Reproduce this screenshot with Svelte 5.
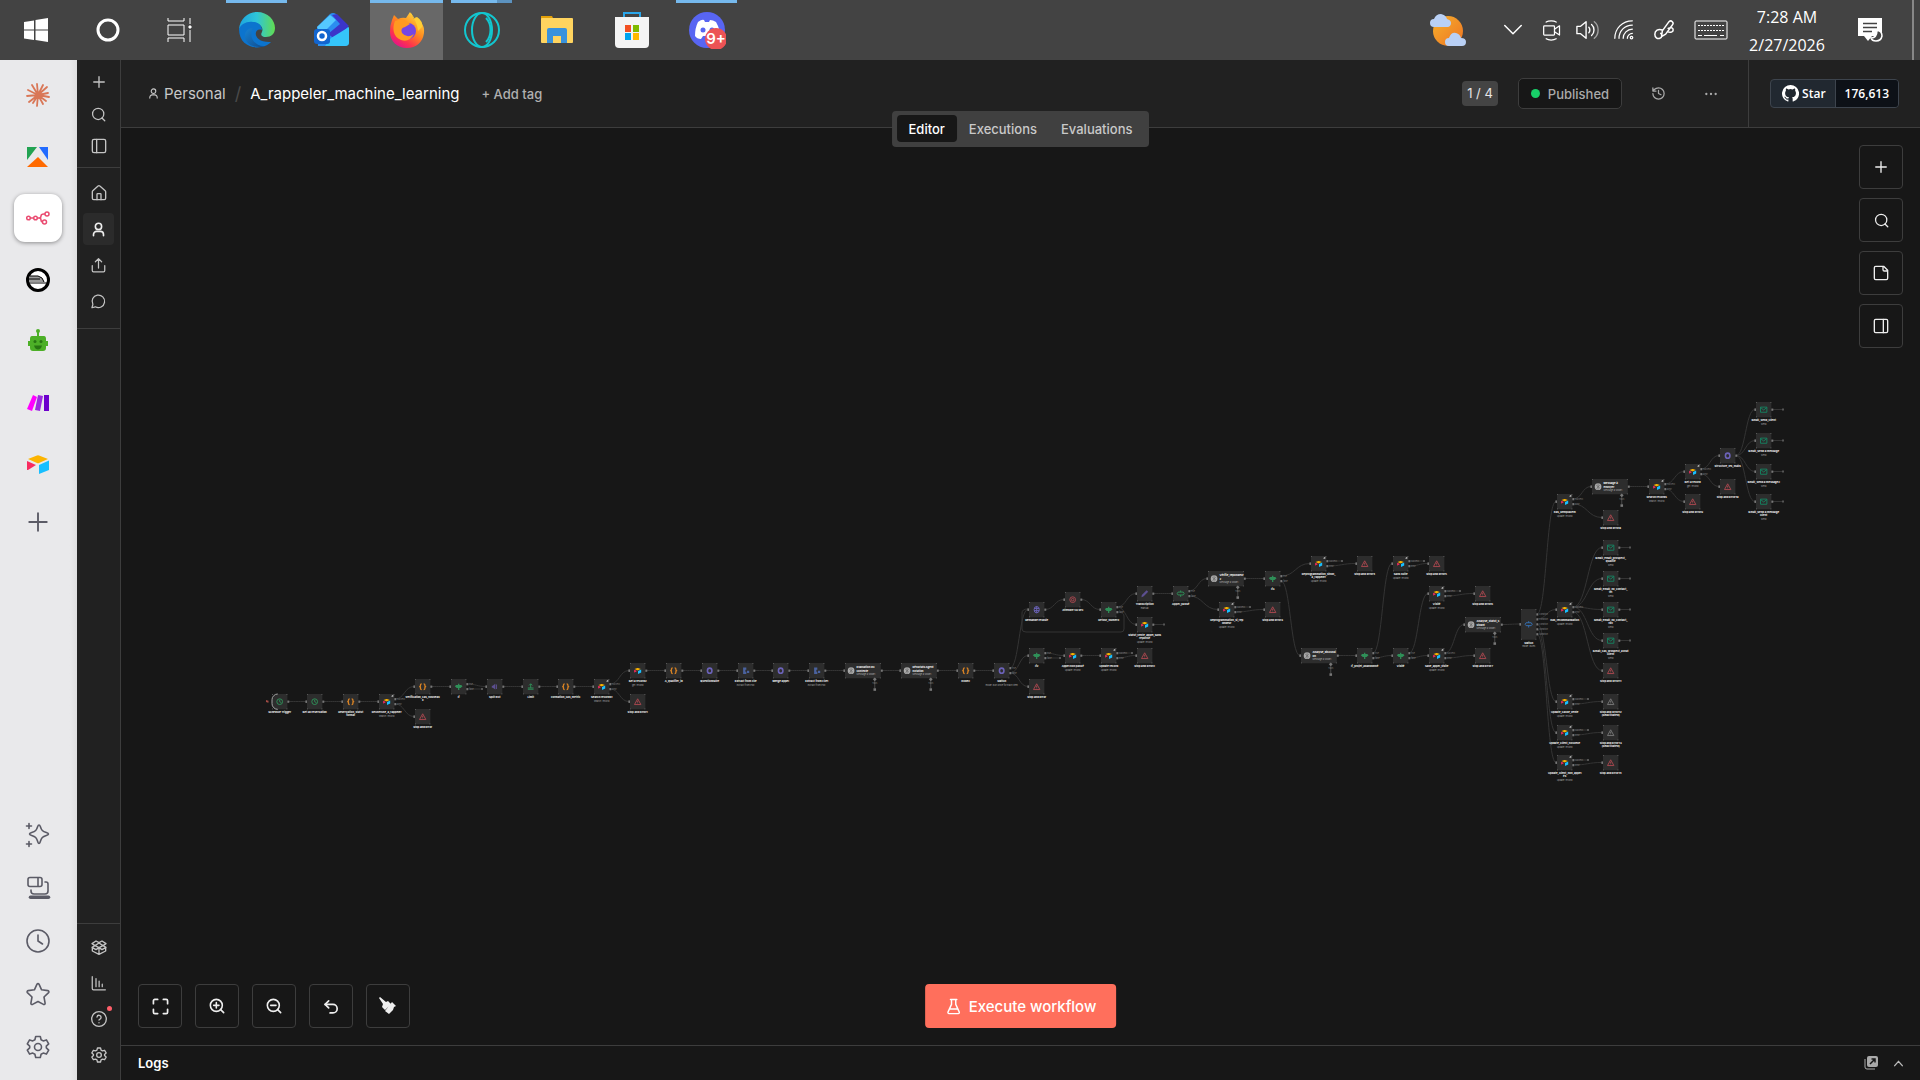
<script lang="ts">
	// Stroke icons, all drawn in a 24 unit box
	const icons: Record<string, string> = {
		plus: '<path d="M5 12h14M12 5v14"/>',
		search: '<circle cx="11.5" cy="11" r="9"/><path d="m22 22-4.500-4.500"/>',
		panelLeft: '<rect x="2" y="2" width="20" height="20" rx="2.500"/><path d="M8.500 2v20"/>',
		panelRight: '<rect x="2" y="2" width="20" height="20" rx="2"/><path d="M15.500 2v20"/>',
		home: '<path d="M15 22v-8a1 1 0 0 0-1-1h-4a1 1 0 0 0-1 1v8"/><path d="M2 10a2 2 0 0 1 .7-1.500l7.900-7a2 2 0 0 1 2.700 0l8 7A2 2 0 0 1 22 10v10a2 2 0 0 1-2 2H4a2 2 0 0 1-2-2z"/>',
		user: '<circle cx="12" cy="7" r="5"/><path d="M20 22v-2a5 5 0 0 0-5-5H9a5 5 0 0 0-5 5v2"/>',
		share: '<path d="M2 12v8a2 2 0 0 0 2 2h16a2 2 0 0 0 2-2v-8M17 6l-5-5-5 5M12 1v15"/>',
		chat: '<path d="M7 20.500A10 10 0 1 0 3 16.500L1.500 22z"/>',
		box: '<path d="M12 22v-9M2 12.500V18l10 5 10-5v-5.500M1.500 7l6-4L12 5.500 16.500 3l6 4-4.500 3 4.500 2.500-6 3.500L12 13l-4.500 3-6-3.500L6 10zM6 10l6 3 6-3-6-4z"/>',
		chart: '<path d="M2 1v19a2 2 0 0 0 2 2h19M8 4v13M13 8v9M18 13v4"/>',
		help: '<circle cx="12" cy="12" r="11"/><path d="M9 9a3 3 0 0 1 6 1c0 2-3 3-3 3.500M12 17.500v.1"/>',
		gear: '<path d="M9.700 1.500h4.600l.8 3.200 2.100 1.200 3.200-1 2.300 4-2.400 2.300v1.600l2.400 2.300-2.300 4-3.200-1-2.100 1.200-.8 3.200H9.700l-.8-3.200-2.100-1.200-3.200 1-2.300-4 2.400-2.300v-1.600L1.300 8.900l2.300-4 3.200 1 2.100-1.200z"/><circle cx="12" cy="12" r="3.500"/>',
		history: '<path d="M3 12a9 9 0 1 0 9-9 9.800 9.800 0 0 0-6.700 2.700L3 8M3 3v5h5M12 7v5l4 2"/>',
		dots: '<circle cx="4" cy="12" r="1"/><circle cx="12" cy="12" r="1"/><circle cx="20" cy="12" r="1"/>',
		note: '<path d="M16 2H4a2 2 0 0 0-2 2v16a2 2 0 0 0 2 2h16a2 2 0 0 0 2-2V8zM15 2v5a2 2 0 0 0 2 2h5"/>',
		fit: '<path d="M8 2H4a2 2 0 0 0-2 2v4M16 2h4a2 2 0 0 1 2 2v4M2 16v4a2 2 0 0 0 2 2h4M22 16v4a2 2 0 0 1-2 2h-4"/>',
		zoomIn: '<circle cx="11" cy="11" r="9"/><path d="m22 22-4.500-4.500M11 7v8M7 11h8"/>',
		zoomOut: '<circle cx="11" cy="11" r="9"/><path d="m22 22-4.500-4.500M7 11h8"/>',
		undo: '<path d="M8 14 3 9l5-5"/><path d="M3 9h11a6 6 0 0 1 0 12h-4"/>',
		flask: '<path d="M9 2v7L4 20a1.500 1.500 0 0 0 1.400 2h13.200A1.500 1.500 0 0 0 20 20L15 9V2M7.500 2h9M6.500 15.500h11"/>',
		up: '<path d="m5 16 7-8 7 8"/>',
		sparkle: '<path d="M13 2c.8 0 1 .6 1.300 1.500 1.200 3.800 2.200 4.900 6 6 .9.300 2.200.8 2.200 1.500s-1.300 1.200-2.200 1.500c-3.800 1.200-4.800 2.200-6 6-.3.900-.5 2-1.300 2s-1-1.100-1.300-2c-1.200-3.800-2.200-4.800-6-6-.9-.3-2.200-.8-2.200-1.500s1.300-1.200 2.200-1.500c3.800-1.100 4.800-2.200 6-6C12 2.600 12.200 2 13 2z"/><path d="M3 .500v5M.500 3h5M3 18.500v5M.500 21h5"/>',
		devices: '<rect x="2" y="1.500" width="14" height="9" rx="2"/><path d="M12 2v8M19 6h1a2 2 0 0 1 2 2v7a3 3 0 0 1-3 3H8a3 3 0 0 1-3-3v-1"/><path stroke-width="3.500" d="M4.500 21.300h18"/>',
		clock: '<circle cx="12" cy="12" r="11"/><path d="M12 6v6l4.500 3"/>',
		star: '<path d="M11 2.200a1.200 1.200 0 0 1 2 0l2.600 5.600 6.300.8a1.200 1.200 0 0 1 .7 2L18 15l1.100 6.200a1.200 1.200 0 0 1-1.700 1.200L12 19.500l-5.400 2.900a1.200 1.200 0 0 1-1.700-1.200L6 15l-4.600-4.400a1.200 1.200 0 0 1 .7-2l6.300-.8z"/>',
		chevron: '<path d="m1 6 11 11L23 6"/>',
		camera: '<rect x="2" y="7" width="13" height="11" rx="1"/><path d="m15 11 6-4v11l-6-4M5 2.500c3-2 9-2 12 0M5 22.500c3 2 9 2 12 0"/>',
		volume: '<path d="M1 8v8h4l6 5V3L5 8zM14 9c1.500 1.500 1.500 4.500 0 6M17 6c3.500 3 3.500 9 0 12"/><path opacity=".5" d="M20 3c5.500 4.500 5.500 13.500 0 18"/>',
		wifi: '<path d="M1 22C1 10 10 1 22 1M6 22C6 13 13 6 22 6M11 22c0-6 5-11 11-11M16 22c0-3 3-6 6-6"/><circle cx="21" cy="21" r="1.500"/>',
		pen: '<path d="M9 20 10 13 18 2q2-2 4 0t0 4l-8 11zM10 12c-5-2-9 1-9 5s3 6 6 5 3-5 1-6M17 10c4-2 6 0 6 2s-3 4-7 2"/>'
	};

	const pinned = ['claude', 'convert', 'n8n', 'train', 'robot', 'make', 'airtable'];
	const tools = ['sparkle', 'devices', 'clock', 'star', 'gear'];
	const apps = [
		{ name: 'Edge', open: true },
		{ name: 'Outlook' },
		{ name: 'Firefox', open: true, active: true },
		{ name: 'Opera', open: true, stacked: true },
		{ name: 'Explorer' },
		{ name: 'Store' },
		{ name: 'Discord', open: true }
	];

	type FlowNode = { id: string; x: number; y: number; kind: string; label: string[]; sub?: string; outs?: number };

	const n = (id: string, x: number, y: number, kind: string, label: string, sub = '', outs = 1): FlowNode => ({
		id, x, y, kind, label: label.split('|'), sub, outs
	});

	// x and y are the top left corner of the node on the canvas
	const nodes: FlowNode[] = [
		n('trigger', 272, 694, 'clock', 'Schedule Trigger'),
		n('wait', 307, 694, 'clock', 'Get all reservation'),
		n('code1', 343, 694, 'code', 'Reservation_statut|format'),
		n('air1', 379, 694, 'airtable', 'Recherche_a_rappeler', 'search: record', 2),
		n('code2', 415, 679, 'code', 'verification_cas_nouveau|x'),
		n('stop1', 415, 709, 'stop', 'Stop and Error'),
		n('if1', 451, 679, 'if', 'If', '', 2),
		n('split1', 487, 679, 'speaker', 'Split Out'),
		n('limit', 523, 679, 'limit', 'Limit'),
		n('code3', 558, 679, 'code', 'Formation_cas_metric'),
		n('air2', 594, 679, 'airtable', 'Search records1', 'search: record', 2),
		n('air3', 630, 663, 'airtable', 'Get a record2', 'get: record'),
		n('stop2', 630, 694, 'stop', 'Stop and Error1'),
		n('code4', 666, 663, 'code', 'A_qualifier_id'),
		n('data1', 702, 663, 'data', 'Questionnaire'),
		n('blue1', 738, 663, 'extract', 'Extract from File', 'Extract from PDF'),
		n('data2', 773, 663, 'data', 'Merge appel'),
		n('blue2', 809, 663, 'extract', 'Extract from File1', 'Extract from PDF'),
		n('agent1', 845, 663, 'agent', 'Evaluation du|contexte'),
		n('agent2', 901, 663, 'agent', 'Résultats Agent|notation'),
		n('code5', 958, 663, 'code', 'Code2'),
		n('data3', 994, 663, 'data', 'Switch', 'mode: Run Once for Each Item', 2),
		n('loop', 1029, 602, 'globe', 'Demande reussie'),
		n('retry', 1065, 592, 'ring', 'Attendre 50 sec'),
		n('if2', 1101, 602, 'if', 'Retour_Numero', '', 2),
		n('edit', 1137, 586, 'pencil', 'Transcription', 'manual'),
		n('air4', 1137, 617, 'airtable', 'Statut_vente_appel_sans|reponse', 'update: record'),
		n('if3', 1173, 586, 'sign', 'Appel_passé', '', 2),
		n('if4', 1029, 648, 'if', 'If2', '', 2),
		n('air5', 1065, 648, 'airtable', 'Appel non passé', 'update: record'),
		n('air6', 1101, 648, 'airtable', 'Update record', 'update: record', 2),
		n('stop3', 1137, 648, 'stop', 'Stop and Error2'),
		n('stop4', 1029, 679, 'stop', 'Stop and Error'),
		n('agent3', 1208, 571, 'agent', 'Vérifie_repondeur|2'),
		n('if5', 1265, 571, 'if', 'If3', '', 2),
		n('air7', 1219, 602, 'airtable', 'Reprogrammation_si_rep|ondeur', 'update: record', 2),
		n('stop5', 1265, 602, 'stop', 'Stop and Error3'),
		n('air8', 1311, 556, 'airtable', 'Reprogrammation_sinon_|à_rappeler', 'update: record', 2),
		n('stop6', 1357, 556, 'stop', 'Stop and Error4'),
		n('air9', 1393, 556, 'airtable', 'Sans suite', 'update: record', 2),
		n('stop7', 1429, 556, 'stop', 'Stop and Error5'),
		n('air10', 1429, 586, 'airtable', 'Visité', 'update: record', 2),
		n('stop8', 1475, 586, 'stop', 'Stop and Error6'),
		n('agent4', 1301, 648, 'agent', 'Analyse_discussi|on'),
		n('if6', 1357, 648, 'if', 'If_projet_abandonné', '', 2),
		n('if7', 1393, 648, 'if', 'Visité', '', 2),
		n('air11', 1429, 648, 'airtable', 'Save_appel_visite', 'update: record', 2),
		n('agent5', 1465, 617, 'agent', 'Analyse_statut_s|uivant'),
		n('stop9', 1475, 648, 'stop', 'Stop and Error7'),
		n('switch', 1521, 609, 'switch', 'Switch', 'mode: Rules', 5),
		n('air12', 1557, 494, 'airtable', 'Cas_Remplacem', 'update: record', 2),
		n('agent6', 1592, 479, 'agent', 'Message à|envoyer'),
		n('stop10', 1603, 510, 'stop', 'Stop and Error8'),
		n('air13', 1649, 479, 'airtable', 'Search records', 'search: record', 2),
		n('air14', 1685, 464, 'airtable', 'Get a record', 'get: record', 2),
		n('stop11', 1685, 494, 'stop', 'Stop and Error9'),
		n('data4', 1720, 448, 'data', 'Structure_les_mails'),
		n('stop12', 1720, 479, 'stop', 'Stop and Error10'),
		n('mail1', 1756, 402, 'mail', 'Gmail_Send_client', 'Send'),
		n('mail2', 1756, 433, 'mail', 'Gmail_Send a message', 'Send'),
		n('mail3', 1756, 464, 'mail', 'Gmail_Send a message2', 'Send'),
		n('mail4', 1756, 494, 'mail', 'Gmail_Send a message|client', 'Send'),
		n('mail5', 1603, 540, 'mail', 'Gmail_email_prospect_|qualifié', 'Send'),
		n('mail6', 1603, 571, 'mail', 'Gmail_email_no_contact_|tel', 'Send'),
		n('mail7', 1603, 602, 'mail', 'Gmail_email_no_contact_|rdv', 'Send'),
		n('mail8', 1603, 633, 'mail', 'Gmail_cas_prospect_achat|client', 'Send'),
		n('stop13', 1603, 663, 'stop', 'Stop and Error11'),
		n('air15', 1557, 602, 'airtable', 'Cas_recommandation', 'update: record', 2),
		n('air16', 1557, 694, 'airtable', 'Update_cause_vente', 'update: record', 2),
		n('air17', 1557, 725, 'airtable', 'Update_client_nouvelle', 'update: record', 2),
		n('air18', 1557, 755, 'airtable', 'Update_client_non_appel|és', 'update: record', 2),
		n('off1', 1603, 694, 'stopOff', 'Stop and Error12|(Deactivated)'),
		n('off2', 1603, 725, 'stopOff', 'Stop and Error13|(Deactivated)'),
		n('stop14', 1603, 755, 'stop', 'Stop and Error14')
	];

	// source, target, output index
	const links: [string, string, number?][] = [
		['trigger', 'wait'], ['wait', 'code1'], ['code1', 'air1'], ['air1', 'code2'], ['air1', 'stop1', 1],
		['code2', 'if1'], ['if1', 'split1'], ['split1', 'limit'], ['limit', 'code3'], ['code3', 'air2'],
		['air2', 'air3'], ['air2', 'stop2', 1], ['air3', 'code4'], ['code4', 'data1'], ['data1', 'blue1'],
		['blue1', 'data2'], ['data2', 'blue2'], ['blue2', 'agent1'], ['agent1', 'agent2'], ['agent2', 'code5'],
		['code5', 'data3'], ['data3', 'loop'], ['data3', 'if4', 1], ['data3', 'stop4', 1], ['loop', 'retry'],
		['retry', 'if2'], ['if2', 'edit'], ['if2', 'air4'], ['edit', 'if3'], ['if3', 'agent3'], ['if3', 'air7', 1],
		['if4', 'air5'], ['air5', 'air6'], ['air6', 'stop3', 1], ['agent3', 'if5'], ['air7', 'stop5', 1],
		['if5', 'air8'], ['if5', 'agent4', 1], ['air8', 'stop6', 1], ['agent4', 'if6'], ['if6', 'air9'],
		['if6', 'if7', 1], ['if7', 'air10'], ['if7', 'air11', 1], ['air9', 'stop7', 1], ['air10', 'stop8', 1],
		['air11', 'agent5'], ['air11', 'stop9', 1], ['agent5', 'switch'], ['switch', 'air12'],
		['switch', 'air15', 1], ['switch', 'air16', 2], ['switch', 'air17', 3], ['switch', 'air18', 4],
		['air12', 'agent6'], ['air12', 'stop10', 1], ['agent6', 'air13'], ['air13', 'air14'],
		['air13', 'stop11', 1], ['air14', 'data4'], ['air14', 'stop12', 1], ['data4', 'mail1'], ['data4', 'mail2'],
		['data4', 'mail3'], ['data4', 'mail4'], ['air15', 'mail5'], ['air15', 'mail6'], ['air15', 'mail7'],
		['air15', 'mail8'], ['air15', 'stop13', 1], ['air16', 'off1', 1], ['air17', 'off2', 1], ['air18', 'stop14', 1]
	];

	// nodes with an unconnected output
	const open = ['if1', 'if4', 'air4', 'air6', 'air7', 'air8', 'air9', 'air10', 'air16', 'air17', 'air18',
		'mail1', 'mail2', 'mail3', 'mail4', 'mail5', 'mail6', 'mail7', 'mail8'];
	const lowStub = ['if1', 'if4'];

	const byId = Object.fromEntries(nodes.map((node) => [node.id, node]));
	const widthOf = (node: FlowNode) => (node.kind === 'agent' ? 36 : 15);
	const heightOf = (node: FlowNode) => (node.kind === 'switch' ? 30 : 15);
	const stubLength = (node: FlowNode) => (node.kind !== 'mail' && node.outs === 2 ? 14 : 10);

	function outY(node: FlowNode, index = 0) {
		const mid = node.y + heightOf(node) / 2;
		const count = node.outs ?? 1;
		return mid + (index - (count - 1) / 2) * 5;
	}

	function linkPath([from, to, index]: [string, string, number?]) {
		const a = byId[from];
		const b = byId[to];
		const x1 = a.x + widthOf(a) + 1;
		const y1 = outY(a, index);
		const x2 = b.x - 1;
		const y2 = b.y + heightOf(b) / 2;
		const mid = (x1 + x2) / 2;
		return `M${x1} ${y1}C${mid} ${y1} ${mid} ${y2} ${x2} ${y2}`;
	}
</script>

{#snippet icon(name: string, size = 16, weight = 2)}
	<svg class="icon" width={size} height={size} viewBox="0 0 24 24" stroke-width={weight} aria-hidden="true">{@html icons[name]}</svg>
{/snippet}

{#snippet airtableLogo()}
	<path fill="#fcb400" d="M2 7 11 3.500a3 3 0 0 1 2 0L22 7l-9 4a3 3 0 0 1-2 0z" />
	<path fill="#18bfff" d="m13 13 10-4.500V18l-10 4z" />
	<path fill="#f82b60" d="M1 9l9 4-8 5H1z" />
{/snippet}

<div class="screen">
	<header class="taskbar">
		<nav class="system" aria-label="System">
			<button aria-label="Start">
				<svg width="24" height="24" viewBox="0 0 24 24" fill="#fff"><path d="M0 4l10-1.500V11.500H0zM11.500 2 24 0v11.500H11.500zM0 12.500h10V22L0 20.500zM11.500 12.500H24V24l-12.500-2z" /></svg>
			</button>
			<button aria-label="Cortana">
				<svg width="24" height="24" viewBox="0 0 24 24" fill="none" stroke="#fff" stroke-width="3"><circle cx="12" cy="12" r="10" /></svg>
			</button>
			<button aria-label="Task view">
				<svg width="26" height="24" viewBox="0 0 26 24" fill="none" stroke="#fff"><path d="M1 0v3h16V0M1 24v-4h16v4M1 7h16v10H1zM23 0v6M23 12v12" /><path fill="#fff" d="M22 8h2v2h-2z" /></svg>
			</button>
		</nav>
		<nav class="apps" aria-label="Applications">
			{#each apps as app}
				<button class:active={app.active} class:open={app.open} class:stacked={app.stacked} aria-label={app.name}>
					<svg width="38" height="38" viewBox="0 0 38 38" fill="none">
						{#if app.name === 'Edge'}
							<defs>
								<linearGradient id="edgeTop" x1="0" x2="1"><stop stop-color="#1ca4e0" /><stop offset=".5" stop-color="#2fc5d8" /><stop offset="1" stop-color="#62dc50" /></linearGradient>
								<linearGradient id="edgeLow" x1="0" y1="0" x2="1" y2="1"><stop stop-color="#1682d4" /><stop offset="1" stop-color="#114a8b" /></linearGradient>
							</defs>
							<path fill="url(#edgeTop)" d="M1 18C2 8 10 1 19 1c11 0 18 8 18 16 0 6-4 9-9 9-4 0-6-2-4-5 2-5-3-9-8-9-7 0-12 3-15 6z" />
							<path fill="#0c74ce" d="M1 18c2-5 8-8 14-7 6 0 9 4 9 8-9-3-10 13 9 12-8 9-32 8-32-13z" />
							<path fill="url(#edgeLow)" d="M15 17c-5 9 2 19 12 18-4 2-17 2-20-8-1-6 3-10 8-10z" />
						{:else if app.name === 'Outlook'}
							<path fill="#2b8df0" d="M4 16 17 3q3-2 6 0l12 12v17a3 3 0 0 1-3 3H5z" />
							<path fill="#55c8ff" d="m4 16 13-12 6 5L8 24z" />
							<path fill="#3b35c9" d="m19 4 5-1 12 12-14 13-7-5 12-10z" />
							<path fill="#35c5fa" d="m18 27 18-11v16q0 3-4 3H12z" />
							<rect x="1" y="18" width="16" height="15" rx="3" fill="#1265cf" /><circle cx="9" cy="25" r="4" stroke="#fff" stroke-width="2.5" />
						{:else if app.name === 'Firefox'}
							<defs><linearGradient id="fox" x1="1" y1="0" x2=".3" y2="1"><stop stop-color="#fff44f" /><stop offset=".5" stop-color="#ff8a1e" /><stop offset=".8" stop-color="#ff334d" /><stop offset="1" stop-color="#e61587" /></linearGradient></defs>
							<path fill="url(#fox)" d="M4 9l2-5 4 4q4-2 8-1l4-6 4 7 2-2c5 4 9 9 8 16-1 9-8 15-17 15C9 37 2 30 2 21q0-7 2-12z" />
							<circle cx="20" cy="20" r="8" fill="#7446e4" />
							<path fill="#ff9a21" d="M7 10q7-3 11 0l4 3-5 3q-5 1-3 6 5 6 12 1-5 9-13 6C5 26 4 17 7 10z" />
							<path fill="#ffcf35" d="M22 3q7 6 8 17l4-4q1-6-5-10l-2 2-4-6z" />
						{:else if app.name === 'Opera'}
							<g stroke="#12c6cf" stroke-width="2"><circle cx="19" cy="19" r="17" /><ellipse cx="19" cy="19" rx="10" ry="17" /><path d="M23 7c6 6 6 18 0 24" /></g>
						{:else if app.name === 'Explorer'}
							<path fill="#e3a008" d="M3 5h11l2 4H3z" /><rect x="3" y="7" width="32" height="25" rx="1" fill="#ffd45f" />
							<path fill="#3992dc" d="M9 19q0-2 2-2h16q2 0 2 2v13h-6v-7h-8v7H9z" />
						{:else if app.name === 'Store'}
							<path stroke="#2aa6ea" stroke-width="2" d="M11 9V2h16v7" /><path fill="#f4f4f4" d="M2 6h34v27q0 4-4 4H6q-4 0-4-4z" />
							<path fill="#f25022" d="M12 14h6v7h-6z" /><path fill="#7fba00" d="M20 14h6v7h-6z" /><path fill="#00a4ef" d="M12 22h6v7h-6z" /><path fill="#ffb900" d="M20 22h6v7h-6z" />
						{:else}
							<circle cx="19" cy="19" r="18" fill="#5865f2" />
							<path fill="#fff" d="M10 11q4-3 6-2l1 2h4l1-2q3 0 6 2 4 7 4 14-4 3-7 3l-1-3h-9l-2 3q-4 0-6-3 0-8 3-14z" /><circle cx="15" cy="19" r="2.500" fill="#5865f2" /><circle cx="24" cy="19" r="2.500" fill="#5865f2" />
							<circle cx="28" cy="28" r="11" fill="#ec5355" />
							<text x="28" y="33" class="badge" text-anchor="middle">9+</text>
						{/if}
					</svg>
				</button>
			{/each}
		</nav>
		<div class="tray">
			<button class="weather" aria-label="Weather">
				<svg width="38" height="34" viewBox="0 0 38 34">
					<defs><linearGradient id="sun" y2="1"><stop stop-color="#f6b02c" /><stop offset="1" stop-color="#ee7423" /></linearGradient></defs>
					<circle cx="19" cy="18" r="15" fill="url(#sun)" />
					<path fill="#b9d0f5" d="M5 14a4 4 0 0 1 0-8q2-5 7-5 5 1 6 5 4 1 4 4 0 3-3 4zM20 33a4 4 0 0 1 0-8q2-6 7-5 4 1 5 5 5 0 5 4 0 4-4 4z" />
				</svg>
			</button>
			<button class="chev" aria-label="Show hidden icons">{@render icon('chevron', 18, 2)}</button>
			<button class="small" aria-label="Meet now">{@render icon('camera', 20, 1.5)}</button>
			<button class="small" aria-label="Volume">{@render icon('volume', 22, 1.5)}</button>
			<button class="wide" aria-label="Network">{@render icon('wifi', 20, 1.5)}</button>
			<button class="wide" aria-label="Pen">{@render icon('pen', 20, 1.8)}</button>
			<button class="keyboard" aria-label="Keyboard">
				<svg width="34" height="20" viewBox="0 0 34 20" fill="none" stroke="#fff"><rect x="1" y="1" width="32" height="18" rx="1" /><path stroke-dasharray="2 1" d="M4 5.500h26M4 10.500h26" /><path d="M4 15.500h4M10 15.500h13M26 15.500h4" /></svg>
			</button>
			<time datetime="2026-02-27T07:28">7:28 AM<br />2/27/2026</time>
			<button class="notice" aria-label="Notifications">
				<svg width="26" height="26" viewBox="0 0 26 26"><path fill="#fff" d="M1 1h24v18H15l-4 5-4-5H1z" /><path stroke="#444" stroke-width="1.500" d="M6 6.500h14M6 10.500h14M6 14.500h9" /><path fill="#444" stroke="#fff" stroke-width="1.500" d="M20 13q5 1 5 6-1 5-6 5-4 0-5-3 6 0 6-8z" /></svg>
			</button>
		</div>
	</header>

	<div class="body">
		<aside class="browser">
			<div class="pinned">
				{#each pinned as name}
					<button class:current={name === 'n8n'} aria-label={name}>
						<svg width="24" height="24" viewBox="0 0 24 24" fill="none">
							{#if name === 'claude'}
								<g stroke="#d97757" stroke-width="1.800" stroke-linecap="round"><path d="M12 12 11 1M12 12l5-10M12 12l9-8M12 12l10-2M12 12l11 2M12 12l8 6M12 12l5 9M12 12l-1 11M12 12l-5 8M12 12l-9 7M12 12 1 13M12 12 2 7M12 12 6 2" /></g>
							{:else if name === 'convert'}
								<path fill="#22a352" d="M1 2h10L1 15z" /><path fill="#226bff" d="M13 2h9v13z" /><path fill="#ff6a00" d="m12 12 10 10H1z" />
							{:else if name === 'n8n'}
								<g stroke="#ea4b71" stroke-width="1.500"><circle cx="2.500" cy="12" r="1.800" /><circle cx="9.500" cy="12" r="1.800" /><circle cx="21" cy="8" r="2" /><circle cx="18.500" cy="16" r="2" /><path d="M4.500 12h3M11.500 12h1.500q2 0 2-2t3-2h1M13 12q2 0 2 2t2 2" /></g>
							{:else if name === 'train'}
								<circle cx="12" cy="12" r="10.500" fill="#fff" stroke="#000" stroke-width="3" /><path fill="#999" d="M3 8h9q5 1 6 6H3z" /><path stroke="#000" d="M3 8h9q5 1 6 6M3 11h11M2 15h20" />
							{:else if name === 'robot'}
								<path fill="#4caf27" d="M11 3h2v4h5q2 0 2 3v2h2v5h-2v2q0 3-3 3H7q-3 0-3-3v-2H2v-5h2v-2q0-3 2-3h5z" /><circle cx="12" cy="2" r="2" fill="#4caf27" /><g fill="#277512"><circle cx="9" cy="12.500" r="1.500" /><circle cx="15" cy="12.500" r="1.500" /><path d="M8 16.500h8q-1 4-4 4t-4-4z" /></g>
							{:else if name === 'make'}
								<path fill="#f0f" d="m1 18 6-14 4 2-5 14z" /><path fill="#9b2be0" d="m9 19 3-15 5 1-3 15z" /><path fill="#6d00cc" d="M18 4h5v16h-5z" />
							{:else}
								{@render airtableLogo()}
							{/if}
						</svg>
					</button>
				{/each}
			</div>
			<button class="newtab" aria-label="Add">{@render icon('plus', 30, 1.5)}</button>
			<div class="tools">
				{#each tools as name}
					<button aria-label={name}>{@render icon(name, 24, 1.6)}</button>
				{/each}
			</div>
		</aside>

		<nav class="rail" aria-label="Main">
			<div class="group first">
				<button aria-label="Create">{@render icon('plus', 18, 1.8)}</button>
				<button aria-label="Search">{@render icon('search', 15, 2)}</button>
				<button aria-label="Toggle sidebar">{@render icon('panelLeft', 16, 2)}</button>
			</div>
			<div class="group second">
				<button aria-label="Home">{@render icon('home', 16, 2)}</button>
				<button class="current" aria-label="Personal">{@render icon('user', 15, 2.6)}</button>
				<button aria-label="Shared">{@render icon('share', 15, 2)}</button>
				<button aria-label="Chat">{@render icon('chat', 15, 2)}</button>
			</div>
			<div class="group last">
				<button aria-label="Templates">{@render icon('box', 16, 2)}</button>
				<button aria-label="Insights">{@render icon('chart', 15, 2)}</button>
				<button class="help" aria-label="Help">{@render icon('help', 16, 2)}</button>
				<button aria-label="Settings">{@render icon('gear', 16, 2)}</button>
			</div>
		</nav>

		<main>
			<header class="workflow">
				<a class="owner" href="#personal">{@render icon('user', 11, 2.4)}Personal</a>
				<span class="slash">/</span>
				<h1>A_rappeler_machine_learning</h1>
				<button class="addtag">+ Add tag</button>
				<div class="actions">
					<span class="count">1 / 4</span>
					<button class="published"><i></i>Published</button>
					<button class="plain" aria-label="History">{@render icon('history', 15, 2)}</button>
					<button class="plain" aria-label="More">{@render icon('dots', 14, 2)}</button>
				</div>
				<div class="github">
					<a class="stargroup" href="#star">
						<svg width="17" height="17" viewBox="0 0 16 16" fill="#fff" aria-hidden="true"><path d="M8 0a8 8 0 0 0-2.530 15.590c.4.070.550-.17.550-.38v-1.490c-2.010.37-2.530-.49-2.690-.94-.09-.23-.48-.94-.82-1.130-.28-.15-.68-.52-.01-.53.63-.01 1.080.58 1.230.82.72 1.210 1.870.87 2.330.66.07-.52.28-.87.51-1.070-1.780-.2-3.640-.89-3.640-3.950 0-.87.31-1.590.82-2.150-.08-.2-.36-1.020.08-2.120 0 0 .67-.21 2.200.82a7.600 7.600 0 0 1 4 0c1.530-1.040 2.200-.82 2.200-.82.44 1.100.16 1.920.08 2.120.51.56.82 1.270.82 2.150 0 3.070-1.870 3.750-3.650 3.950.29.25.54.73.54 1.480v2.200c0 .21.150.46.55.38A8 8 0 0 0 8 0z" /></svg>
						<span class="starword">Star</span>
						<span class="stars">176,613</span>
					</a>
				</div>
			</header>

			<section class="canvas" aria-label="Workflow canvas">
				<svg class="flow" viewBox="121 128 1799 917">
					<g class="links">
						{#each links as link}
							<path d={linkPath(link)} />
						{/each}
						<!-- loop back to the start of the retry chain -->
						<path d="M1117 612q7 0 7 4v13q0 3-3 3h-95q-4 0-4-3v-16q0-4 6-4" />
						{#each open as id}
							{@const node = byId[id]}
							{@const y = outY(node, lowStub.includes(id) ? 1 : 0)}
							{@const end = node.x + 16 + stubLength(node)}
							<path d="M{node.x + 16} {y}H{end}" />
							<rect class="end" x={end} y={y - 1} width="2" height="2" />
						{/each}
					</g>

					<path class="bolt" d="m266 700 3 1-1 1 1 1-3-1z" />

					{#each nodes as node}
						{@const w = node.kind === 'agent' ? 224 : 96}
						{@const h = node.kind === 'switch' ? 192 : 96}
						<g class="node" transform="translate({node.x} {node.y}) scale(.16)">
							{#if node.id === 'trigger'}
								<path class="card" d="M36 0h60v96H36a36 36 0 0 1-36-36V36A36 36 0 0 1 36 0z" />
								<path class="edge" d="M36 0A36 36 0 0 0 0 36v24a36 36 0 0 0 36 36" />
							{:else}
								<rect class="card" width={w} height={h} rx="6" />
								<rect class="handle" x="-10" y={h / 2 - 8} width="10" height="16" />
							{/if}
							{#each [[0, 0], [w - 6, 0], [0, h - 6], [w - 6, h - 6]] as corner}
								<rect class="corner" x={corner[0]} y={corner[1]} width="6" height="6" />
							{/each}
							{#if !node.kind.startsWith('stop')}
								{#each Array(node.outs) as _, i}
									{@const oy = h / 2 + (i - ((node.outs ?? 1) - 1) / 2) * 31}
									<rect class="handle" x={w} y={oy - 7} width="12" height="14" />
									{#if node.outs === 2 || node.outs === 5}
										<text class="out" x={w + 18} y={oy + 5}>{node.outs === 5 ? 'Condition' : node.kind === 'airtable' ? (i ? 'Error' : 'Success') : i ? 'false' : 'true'}</text>
									{/if}
								{/each}
							{/if}

							{#if node.kind === 'agent'}
								<circle cx="38" cy="48" r="21" fill="#aaa" /><path class="knot" d="M26 38l24 20M50 36 28 60M38 28v40" />
								{#each node.label as line, i}
									<text class="label" x="72" y={30 + i * 24}>{line}</text>
								{/each}
								<text class="sub" x="72" y="78">Message a Model</text>
								<path class="model" d="M186 102v56" /><path class="diamond" d="m186 90 12 12-12 12-12-12z" /><rect class="handle" x="178" y="158" width="16" height="16" />
								<text class="out" x="186" y="132" text-anchor="middle">Tools</text>
							{:else}
								<g transform="translate({w / 2 - 24} {h / 2 - 24}) scale(2)" class="glyph {node.kind}">
									{#if node.kind === 'airtable'}
										{@render airtableLogo()}
									{:else if node.kind === 'clock'}
										<circle cx="12" cy="12" r="9" /><path d="M12 6v6l5 3" />
									{:else if node.kind === 'code'}
										<path d="M9 3q-4 0-4 4v3l-2 2 2 2v3q0 4 4 4M15 3q4 0 4 4v3l2 2-2 2v3q0 4-4 4" />
									{:else if node.kind === 'if'}
										<path class="solid" d="M4 7h16l4 4-6 5h-4v6h-4v-6H6l-6-5zM10 3h4v5h-4z" />
									{:else if node.kind === 'sign' || node.kind === 'switch'}
										<path d="M4 7h16l3 5-3 4H4l-3-4zM12 2v5M12 16v6" />
									{:else if node.kind.startsWith('stop')}
										<path d="m12 3 10 18H2zM12 9v6M12 18v1" />
									{:else if node.kind === 'data'}
										<ellipse cx="12" cy="12" rx="7" ry="8" />
									{:else if node.kind === 'globe'}
										<ellipse cx="12" cy="12" rx="8" ry="10" /><path d="M4 8h16M4 15h16M12 2v20" />
									{:else if node.kind === 'speaker'}
										<path class="solid" d="M14 3v18l-8-6H3V9h3zM16 5h3v14h-3z" />
									{:else if node.kind === 'limit'}
										<path d="M12 3v13M7 8l5-5 5 5M3 20h18M3 16h18" />
									{:else if node.kind === 'extract'}
										<path class="solid" d="M4 2h10v7h-3v6h3v7H4zM16 12h7v7h-7z" />
									{:else if node.kind === 'ring'}
										<circle cx="12" cy="12" r="9" /><circle cx="12" cy="12" r="4" />
									{:else if node.kind === 'pencil'}
										<path class="solid" d="M18 1l5 5L8 21l-6 2 1-7z" />
									{:else if node.kind === 'mail'}
										<path d="M2 4h20v16H2zM2 5l10 8 10-8" />
									{/if}
								</g>
								{#each node.label as line, i}
									<text class="label" x="48" y={h + 24 + i * 20} text-anchor="middle">{line}</text>
								{/each}
								{#if node.sub}
									<text class="sub" x="48" y={h + 24 + node.label.length * 22} text-anchor="middle">{node.sub}</text>
								{/if}
								{#if node.kind === 'airtable' && node.outs === 2}
									<path class="pin" d="M78 14h8v-8" />
								{/if}
							{/if}
						</g>
					{/each}
				</svg>

				<div class="tabs" role="tablist">
					<button role="tab" aria-selected="true" class="selected">Editor</button>
					<button role="tab" aria-selected="false">Executions</button>
					<button role="tab" aria-selected="false">Evaluations</button>
				</div>

				<div class="side">
					<button class="tool" aria-label="Add node">{@render icon('plus', 18, 1.8)}</button>
					<button class="tool" aria-label="Find node">{@render icon('search', 15, 2)}</button>
					<button class="tool" aria-label="Add note">{@render icon('note', 16, 2)}</button>
					<button class="tool" aria-label="Toggle panel">{@render icon('panelRight', 16, 2)}</button>
				</div>

				<div class="controls">
					<button class="tool" aria-label="Fit view">{@render icon('fit', 17, 2.4)}</button>
					<button class="tool" aria-label="Zoom in">{@render icon('zoomIn', 16, 2.4)}</button>
					<button class="tool" aria-label="Zoom out">{@render icon('zoomOut', 16, 2.4)}</button>
					<button class="tool" aria-label="Undo">{@render icon('undo', 17, 2.4)}</button>
					<button class="tool" aria-label="Tidy up">
						<svg width="18" height="18" viewBox="0 0 18 18" fill="#eee"><path d="m0 1 1-1 6 5 2-1 3 3-6 6-3-3 1-3zM13 5l4 4-2 1-1 3-4 4-4-3z" /></svg>
					</button>
				</div>

				<button class="execute">{@render icon('flask', 17, 2)}Execute workflow</button>
			</section>

			<footer>
				<span>Logs</span>
				<div class="logactions">
					<button aria-label="Pop out">
						<svg width="14" height="14" viewBox="0 0 14 14" fill="none"><path stroke="#aaa" d="M1 3v8q0 2 2 2h8" /><rect x="3" width="11" height="11" rx="2" fill="#aaa" /><path stroke="#171717" stroke-width="1.500" d="m6 8 5-5M7.500 3H11v3.500" /></svg>
					</button>
					<button aria-label="Open logs">{@render icon('up', 13, 2.5)}</button>
				</div>
			</footer>
		</main>
	</div>
</div>

<style>
	:global(body) {
		margin: 0;
		background: #171717;
	}

	.screen {
		display: flex;
		flex-direction: column;
		height: 100vh;
		font-family: Inter, 'Liberation Sans', sans-serif;
		color: #fff;
	}

	button {
		display: flex;
		align-items: center;
		justify-content: center;
		padding: 0;
		border: none;
		background: none;
		color: inherit;
		font: inherit;
		cursor: pointer;
	}

	a {
		color: inherit;
		text-decoration: none;
	}

	.icon {
		fill: none;
		stroke: currentColor;
		stroke-linecap: round;
		stroke-linejoin: round;
		overflow: visible;
	}

	/* Taskbar */
	.taskbar {
		display: flex;
		height: 60px;
		flex: none;
		background: #434343;
	}

	.system,
	.apps,
	.tray {
		display: flex;
	}

	.system button {
		width: 72px;
	}

	.apps {
		gap: 2px;
		margin-left: 4px;
	}

	.apps button {
		position: relative;
		width: 73px;
	}

	.apps .active {
		background: #686868;
	}

	.apps .open::before {
		content: '';
		position: absolute;
		top: 0;
		left: 6px;
		right: 6px;
		height: 3px;
		background: #76b9ed;
	}

	.apps .active::before {
		left: 0;
		right: 0;
	}

	.apps .stacked::before {
		background: linear-gradient(90deg, #76b9ed 76%, #5c92bf 76%);
	}

	.badge {
		fill: #fff;
		font-size: 15px;
		font-weight: 600;
	}

	.tray {
		margin-left: auto;
		align-items: center;
		padding-right: 8px;
		border-right: 2px solid #888;
		margin-right: 6px;
	}

	.weather {
		width: 88px;
	}

	.chev {
		width: 42px;
	}

	.small {
		width: 35px;
	}

	.wide {
		width: 40px;
	}

	.keyboard {
		width: 54px;
	}

	time {
		width: 98px;
		padding-top: 1px;
		font-family: 'Open Sans', sans-serif;
		font-size: 16px;
		line-height: 28px;
		text-align: center;
	}

	.notice {
		width: 68px;
	}

	.body {
		display: flex;
		flex: 1;
		min-height: 0;
	}

	/* Browser sidebar */
	.browser {
		display: flex;
		flex-direction: column;
		align-items: center;
		width: 77px;
		padding: 11px 1px 21px 0;
		box-sizing: border-box;
		background: linear-gradient(90deg, #e9e9eb 90%, #dededf);
		color: #5b5b66;
	}

	.pinned {
		display: flex;
		flex-direction: column;
		justify-content: space-between;
		height: 417px;
	}

	.pinned button {
		width: 48px;
		height: 48px;
		border-radius: 11px;
	}

	.pinned .current {
		background: #fff;
		box-shadow: 0 1px 4px rgba(0, 0, 0, 0.4);
	}

	.newtab {
		margin-top: 19px;
	}

	.tools {
		display: flex;
		flex-direction: column;
		gap: 29px;
		margin-top: auto;
	}

	/* App rail */
	.rail {
		display: flex;
		flex-direction: column;
		width: 43px;
		border-right: 1px solid #3d3d3d;
		background: #212121;
		color: #c4c4c4;
	}

	.group {
		display: flex;
		flex-direction: column;
		align-items: center;
		border-bottom: 1px solid #3d3d3d;
	}

	.group button {
		width: 31px;
		height: 32px;
	}

	.first {
		padding: 6px 0 5px;
	}

	.second {
		gap: 4px;
		padding: 9px 0 11px;
	}

	.second .current {
		border-radius: 4px;
		background: #2b2b2b;
		color: #eee;
	}

	.last {
		gap: 4px;
		margin-top: auto;
		padding: 7px 0 9px;
		border-top: 1px solid #3d3d3d;
		border-bottom: none;
	}

	.help {
		position: relative;
	}

	.help::after {
		content: '';
		position: absolute;
		top: 3px;
		right: 2px;
		width: 5px;
		height: 5px;
		border-radius: 50%;
		background: #ff5f6a;
	}

	main {
		display: flex;
		flex-direction: column;
		flex: 1;
		min-width: 0;
	}

	/* Workflow header */
	.workflow {
		display: flex;
		align-items: center;
		height: 67px;
		flex: none;
		padding-left: 27px;
		border-bottom: 1px solid #3d3d3d;
		background: #212121;
	}

	.owner {
		display: flex;
		align-items: center;
		gap: 5px;
		font-size: 15px;
		color: #c8c8c8;
	}

	.slash {
		margin: 0 9px;
		font-size: 18px;
		color: #4a4a4a;
	}

	h1 {
		margin: 0;
		font-size: 15px;
		font-weight: 400;
	}

	.addtag {
		margin-left: 22px;
		font-size: 13px;
		font-weight: 500;
		color: #b0b0b0;
	}

	.actions {
		display: flex;
		align-items: center;
		margin-left: auto;
	}

	.count {
		padding: 4px 5px;
		border-radius: 4px;
		background: #444;
		font-size: 13px;
		line-height: 17px;
		color: #e6e6e6;
	}

	.published {
		gap: 8px;
		height: 31px;
		margin: 0 23px 0 20px;
		padding: 0 12px;
		border: 1px solid #3d3d3d;
		border-radius: 5px;
		background: #171717;
		font-size: 13px;
		font-weight: 500;
		color: #aaa;
	}

	.published i {
		width: 9px;
		height: 9px;
		border-radius: 50%;
		background: #18cf68;
	}

	.plain {
		width: 26px;
		height: 26px;
		margin-right: 27px;
		color: #aaa;
	}

	.plain:last-child {
		margin-right: 24px;
	}

	.github {
		display: flex;
		align-items: center;
		align-self: stretch;
		padding: 0 21px;
		border-left: 1px solid #3d3d3d;
	}

	.stargroup {
		display: flex;
		align-items: center;
		height: 27px;
		padding-left: 11px;
		overflow: hidden;
		border: 1px solid #3d444d;
		border-radius: 4px;
		background: #212830;
		font-family: 'Open Sans', sans-serif;
		font-size: 12px;
		font-weight: 600;
		line-height: 27px;
	}

	.starword {
		margin: 0 9px 0 3px;
	}

	.stars {
		padding: 0 9px;
		border-left: 1px solid #3d444d;
		background: #0d1117;
	}

	/* Canvas */
	.canvas {
		position: relative;
		flex: 1;
		min-height: 0;
	}

	.flow {
		display: block;
		width: 100%;
		height: 100%;
	}

	.links path {
		fill: none;
		stroke: #343434;
	}

	.links .end {
		fill: #555;
	}

	.bolt {
		fill: #a34c45;
	}

	.card {
		fill: #2d2d2d;
	}

	.edge {
		fill: none;
		stroke: #aaa;
		stroke-width: 6;
	}

	.handle {
		fill: #777;
	}

	.corner {
		fill: #5c5c5c;
	}

	.pin {
		fill: none;
		stroke: #bbb;
		stroke-width: 7;
	}

	.label {
		fill: #fff;
		font-size: 17px;
		font-weight: 700;
	}

	.sub {
		fill: #aaa;
		font-size: 14px;
	}

	.out {
		fill: #888;
		font-size: 12px;
	}

	.knot {
		fill: none;
		stroke: #555;
		stroke-width: 3;
	}

	.model {
		stroke: #4a4a4a;
		stroke-width: 6;
	}

	.diamond {
		fill: #777;
	}

	.glyph {
		fill: none;
		stroke-width: 3;
	}

	.clock,
	.if,
	.sign,
	.limit {
		color: #2f8f58;
		stroke: currentColor;
	}

	.code {
		stroke: #d98324;
		stroke-width: 4;
	}

	.stop,
	.ring {
		stroke: #a8474e;
	}

	.stopOff {
		stroke: #777;
	}

	.data,
	.globe {
		stroke: #6b62b8;
	}

	.data {
		stroke-width: 5;
	}

	.speaker,
	.pencil {
		color: #5c4f90;
	}

	.extract {
		color: #4a629e;
	}

	.switch {
		stroke: #3471b5;
	}

	.mail {
		stroke: #16805f;
	}

	.airtable {
		stroke: none;
	}

	.solid {
		fill: currentColor;
		stroke: none;
	}

	.tabs {
		position: absolute;
		top: -17px;
		left: 50%;
		display: flex;
		padding: 4px 5px 5px;
		transform: translateX(-50%);
		border-radius: 4px;
		background: #404040;
	}

	.tabs button {
		height: 27px;
		padding: 0 12px;
		border-radius: 4px;
		font-size: 13px;
		font-weight: 500;
		color: #c9c9c9;
	}

	.tabs .selected {
		background: #171717;
		color: #fff;
	}

	.tool {
		width: 44px;
		height: 44px;
		border: 1px solid #3d3d3d;
		border-radius: 4px;
		background: #171717;
		color: #eee;
	}

	.side {
		position: absolute;
		top: 17px;
		right: 17px;
		display: flex;
		flex-direction: column;
		gap: 9px;
	}

	.controls {
		position: absolute;
		bottom: 17px;
		left: 17px;
		display: flex;
		gap: 13px;
	}

	.execute {
		position: absolute;
		bottom: 17px;
		left: 50%;
		gap: 7px;
		height: 44px;
		padding: 0 20px;
		transform: translateX(-50%);
		border-radius: 4px;
		background: #ff6f5c;
		font-size: 15px;
		font-weight: 500;
		white-space: nowrap;
	}

	footer {
		display: flex;
		align-items: center;
		justify-content: space-between;
		height: 34px;
		flex: none;
		padding: 0 15px 0 17px;
		border-top: 1px solid #3d3d3d;
		font-size: 13px;
		font-weight: 600;
	}

	.logactions {
		display: flex;
		gap: 14px;
		color: #bbb;
	}
</style>
